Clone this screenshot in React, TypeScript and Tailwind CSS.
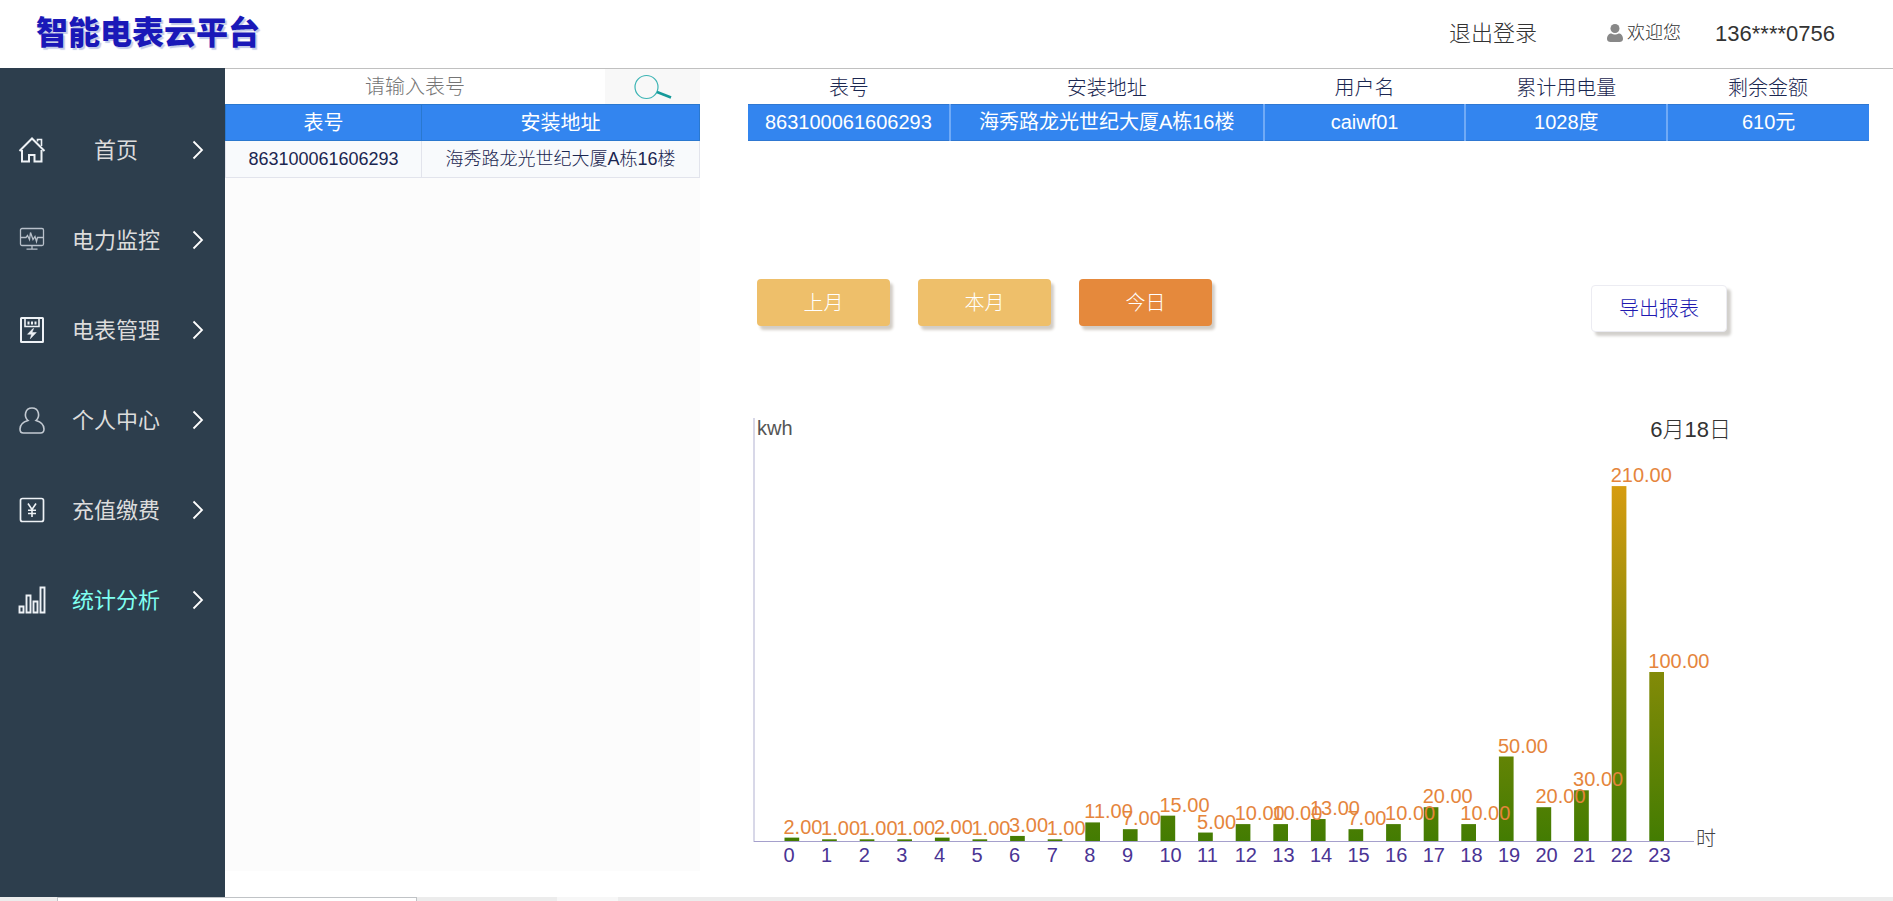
import { useState } from 'react';
import type { ReactNode } from 'react';
import clsx from 'clsx';

interface NavItem {
  label: string;
  icon: ReactNode;
}

interface Meter {
  id: string;
  address: string;
  user: string;
  usage: string;
  balance: string;
}

const navItems: NavItem[] = [
  {
    label: '首页',
    icon: (
      <>
        <path d="M1.5 15 14 2.5 26.5 15" strokeWidth="2" />
        <path d="M4 14v11.5h7V19h5.5v6.5h7V14" strokeWidth="2" />
        <path d="M19.5 5.5v-2h4V10" strokeWidth="1.6" />
      </>
    ),
  },
  {
    label: '电力监控',
    icon: (
      <g stroke="#b8c0ca" strokeWidth="1.3">
        <rect x="2.5" y="2.5" width="23" height="17" rx="1.5" />
        <path d="M3 11.5h5l1.500-2 2 4 1-7 2.500 7 2-3 1.500 5 1-4h5.500" />
        <path d="M14 19.5v3.500M8.500 23.200h11" />
      </g>
    ),
  },
  {
    label: '电表管理',
    icon: (
      <>
        <rect x="3" y="2" width="22" height="24" rx="0.5" strokeWidth="2" />
        <path d="M7 3v7.500h14V3" strokeWidth="1.6" />
        <path d="M10.500 5.500v3M14 5.500v3M17.500 5.500v3" strokeWidth="2" />
        <path d="M15 12.500 9.500 18.300h4l-1.200 4.500 6-6.300h-4.300l1.600-4z" fill="currentColor" strokeWidth="0.5" />
      </>
    ),
  },
  {
    label: '个人中心',
    icon: (
      <path
        d="M10 14.500C5.500 10.500 7 2 14 2s8.500 8.500 4 12.500c5 1.500 8 4.500 8 8.500 0 3-1 4-3.500 4h-17C3 27 2 26 2 23c0-4 3-7 8-8.500z"
        stroke="#c3cad2"
        strokeWidth="1.6"
      />
    ),
  },
  {
    label: '充值缴费',
    icon: (
      <>
        <rect x="2.5" y="2.5" width="23" height="23" rx="2" strokeWidth="1.7" />
        <path d="m10 7.500 4 6 4-6M14 13.500v7.500M10 14.200h8M10 17.500h8" strokeWidth="1.6" />
      </>
    ),
  },
  {
    label: '统计分析',
    icon: (
      <path d="M1.500 20.500h4v6h-4zM8.500 9.500h4v17h-4zM15.500 15.500h4v11h-4zM22.500 1.500h4v25h-4z" strokeWidth="1.9" />
    ),
  },
];

const meters: Meter[] = [
  {
    id: '863100061606293',
    address: '海秀路龙光世纪大厦A栋16楼',
    user: 'caiwf01',
    usage: '1028度',
    balance: '610元',
  },
];

const ranges = ['上月', '本月', '今日'];

const hourly = [2, 1, 1, 1, 2, 1, 3, 1, 11, 7, 15, 5, 10, 10, 13, 7, 10, 20, 10, 50, 20, 30, 210, 100];

const Header = () => (
  <header className="flex h-[68px] items-center justify-between bg-white pr-[58px] pb-0.5 pl-9">
    <h1 className="text-[32px] leading-none font-black text-[#1a18b8] [text-shadow:2px_2px_1px_#c3cbe8]">
      智能电表云平台
    </h1>
    <div className="flex items-center text-[22px] text-[#333]">
      <a href="#logout">退出登录</a>
      <span className="ml-[70px] flex items-center gap-1 text-lg">
        <svg className="h-[18px] w-4 text-[#888]" viewBox="0 0 16 18" fill="currentColor" aria-hidden="true">
          <circle cx="8" cy="4.5" r="4.5" />
          <path d="M0 15c0-3.500 2-5.500 4.500-5.500 1 .8 2.200 1 3.500 1s2.500-.2 3.500-1C14 9.500 16 11.500 16 15c0 2-1.500 3-3.500 3h-9C1.500 18 0 17 0 15z" />
        </svg>
        欢迎您
      </span>
      <span className="ml-[34px]">136****0756</span>
    </div>
  </header>
);

const Sidebar = ({ current }: { current: string }) => (
  <nav className="w-[225px] shrink-0 bg-[#2d3e4d] pt-[37px]">
    <ul>
      {navItems.map((item) => (
        <li key={item.label}>
          <a
            href={`#${item.label}`}
            className={clsx(
              'flex h-[90px] items-center pr-[21px] pl-[18px] text-[22px] font-normal',
              item.label === current ? 'text-[#7ffff0]' : 'text-[#dcdcdc]'
            )}
          >
            <svg className="size-7 shrink-0 text-[#eef2f6]" viewBox="0 0 28 28" fill="none" stroke="currentColor" aria-hidden="true">
              {item.icon}
            </svg>
            <span className="flex-1 pr-[6px] text-center">{item.label}</span>
            <svg className="h-5 w-3 shrink-0 text-white" viewBox="0 0 12 20" fill="none" stroke="currentColor" strokeWidth="1.8" aria-hidden="true">
              <path d="m1.500 1.500 8.500 8.500-8.500 8.500" />
            </svg>
          </a>
        </li>
      ))}
    </ul>
  </nav>
);

const MeterList = () => (
  <section className="mb-[26px] w-[475px] shrink-0 bg-[#fcfcfc]">
    <form className="flex h-[35px]" onSubmit={(e) => e.preventDefault()}>
      <input
        type="text"
        aria-label="表号"
        placeholder="请输入表号"
        className="min-w-0 flex-1 bg-white pt-0.5 text-center text-xl leading-none placeholder:text-[#757575] focus:outline-none"
      />
      <button type="submit" aria-label="搜索" className="flex w-[95px] items-center justify-center bg-[#f8f8f8]">
        <svg className="h-[26px] w-[38px]" viewBox="0 0 38 26" fill="none" aria-hidden="true">
          <circle cx="12.5" cy="13" r="11.5" stroke="#3cb4b4" strokeWidth="1.2" />
          <path d="m23 18 14 5.500" stroke="#169a9a" strokeWidth="2.6" />
        </svg>
      </button>
    </form>
    <table className="w-full table-fixed border-collapse text-center">
      <thead className="bg-[#3385ef] text-xl text-white">
        <tr className="h-9">
          <th className="w-[196px] border border-[#2a78cf] leading-none font-normal">表号</th>
          <th className="border border-[#2a78cf] leading-none font-normal">安装地址</th>
        </tr>
      </thead>
      <tbody className="bg-[#f8fafc] text-lg text-[#1a2650]">
        {meters.map((meter) => (
          <tr key={meter.id} className="h-[37px]">
            <td className="border border-[#e2e4ec] leading-none">{meter.id}</td>
            <td className="border border-[#e2e4ec] leading-none">{meter.address}</td>
          </tr>
        ))}
      </tbody>
    </table>
  </section>
);

const MeterSummary = ({ meter }: { meter: Meter }) => (
  <table className="w-full table-fixed border-collapse text-center text-xl">
    <thead className="text-[#1a2650]">
      <tr className="h-[35px]">
        <th className="w-[18%] pt-1 leading-none font-light">表号</th>
        <th className="w-[28%] pt-1 leading-none font-light">安装地址</th>
        <th className="w-[18%] pt-1 leading-none font-light">用户名</th>
        <th className="w-[18%] pt-1 leading-none font-light">累计用电量</th>
        <th className="w-[18%] pt-1 leading-none font-light">剩余金额</th>
      </tr>
    </thead>
    <tbody className="bg-[#3385ef] font-normal text-white">
      <tr className="h-9 divide-x-2 divide-[#70aaf6] border-y border-y-[#2f78d2]">
        <td className="leading-none">{meter.id}</td>
        <td className="leading-none">{meter.address}</td>
        <td className="leading-none">{meter.user}</td>
        <td className="leading-none">{meter.usage}</td>
        <td className="leading-none">{meter.balance}</td>
      </tr>
    </tbody>
  </table>
);

const BASE = 426;
const STEP = 37.6;
const UNIT = 1.69;

const UsageChart = () => (
  <svg className="w-full max-w-[1000px] text-xl" viewBox="0 0 1000 456" role="img" aria-label="用电量">
    <defs>
      <linearGradient id="bar" gradientUnits="userSpaceOnUse" x1="0" y1="71" x2="0" y2={BASE}>
        <stop offset="0" stopColor="#d69c10" />
        <stop offset="0.5" stopColor="#868b08" />
        <stop offset="1" stopColor="#437c02" />
      </linearGradient>
    </defs>
    <path d={`M6 3V${BASE + 1}`} stroke="#d8d8e8" strokeWidth="2" />
    <path d={`M6 ${BASE + 0.5}H946`} stroke="#a5a0cc" strokeWidth="1" />
    <text x="9" y="20" fill="#555">kwh</text>
    <text x="948" y="431" fill="#444">时</text>
    <text x="983" y="22" textAnchor="end" className="text-[22px]" fill="#333">6月18日</text>
    {hourly.map((value, hour) => (
      <rect key={hour} x={36.5 + hour * STEP} y={BASE - value * UNIT} width="14.7" height={value * UNIT} fill="url(#bar)" />
    ))}
    {hourly.map((value, hour) => (
      <g key={hour}>
        <text x={35.5 + hour * STEP} y={BASE - value * UNIT - 4} fill="#e5853c">{value.toFixed(2)}</text>
        <text x={35.5 + hour * STEP} y="447" fill="#4a3494">{hour}</text>
      </g>
    ))}
  </svg>
);

export default function App() {
  const [range, setRange] = useState('今日');

  return (
    <div
      lang="zh-CN"
      className="flex min-h-screen flex-col bg-white font-['Liberation_Sans','Noto_Sans_CJK_SC',sans-serif] font-light"
    >
      <Header />
      <div className="flex flex-1">
        <Sidebar current="统计分析" />
        <main className="flex min-w-0 flex-1 border-t border-[#c0c0c0]">
          <MeterList />
          <section className="min-w-0 flex-1 pr-6 pl-12">
            <MeterSummary meter={meters[0]} />
            <div className="mt-[138px] flex max-w-[987px] items-start justify-between pr-2 pl-[9px]">
              <div className="flex gap-7">
                {ranges.map((name) => (
                  <button
                    key={name}
                    type="button"
                    onClick={() => setRange(name)}
                    className={clsx(
                      'h-[47px] w-[133px] rounded pt-0.5 text-xl text-white shadow-[3px_4px_3px_#d2cdc6]',
                      name === range ? 'bg-[#e5893c]' : 'bg-[#eebf6a]'
                    )}
                  >
                    {name}
                  </button>
                ))}
              </div>
              <button
                type="button"
                className="mt-1.5 h-[47px] w-[136px] rounded border border-[#ececf2] bg-white pt-0.5 text-xl text-[#2018b0] shadow-[4px_4px_3px_#d2d0cc]"
              >
                导出报表
              </button>
            </div>
            <div className="mt-[83px]">
              <UsageChart />
            </div>
          </section>
        </main>
      </div>
      <footer className="flex h-1 bg-[#ececec]">
        <div className="ml-[57px] w-[360px] border-x border-t border-[#c0c3c6] bg-white" />
        <div className="ml-[140px] w-[61px] bg-[#f7f7f7]" />
      </footer>
    </div>
  );
}
